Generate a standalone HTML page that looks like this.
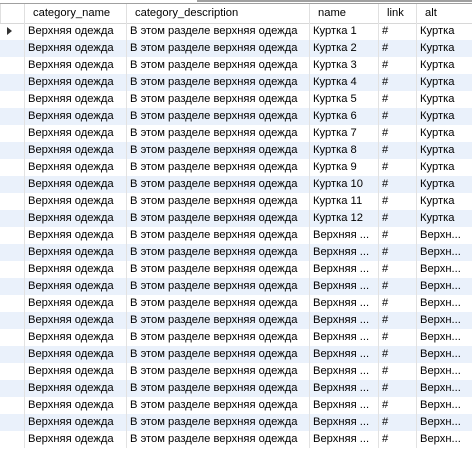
<!DOCTYPE html>
<html><head><meta charset="utf-8"><style>
body{margin:0;width:472px;height:451px;background:#fff;overflow:hidden;font-family:"Liberation Sans","DejaVu Sans",sans-serif;font-size:11.2px;color:#000;position:relative}
.top{position:absolute;left:197px;top:0;width:275px;height:2px;background:#a0a0a0}
.hdr{position:absolute;top:3px;left:0;width:472px;height:19px;border-top:1px solid #a0a0a0;border-bottom:1px solid #d8d8d8;background:#fff}
.row{position:absolute;left:0;width:472px;height:17px}
.alt{background:#eaf1fb}
.c{position:absolute;top:0;height:100%;line-height:17px;white-space:nowrap;overflow:hidden;border-left:1px solid #e2e2e2;padding-left:3px;box-sizing:border-box}
.hdr .c{line-height:19px;padding-left:8px;border-left:1px solid #e0e0e0}
.c0{left:0;width:24px;border-left:none}
.c1{left:24px;width:102px}
.c2{left:126px;width:183px}
.c3{left:309px;width:69px}
.c4{left:378px;width:38px}
.c5{left:416px;width:56px}
.arr{position:absolute;left:7px;top:4px;width:0;height:0;border-top:4px solid transparent;border-bottom:4px solid transparent;border-left:5px solid #333}
</style></head><body>
<div class="top"></div>
<div class="hdr"><div class="c c0"></div><div class="c c1">category_name</div><div class="c c2">category_description</div><div class="c c3">name</div><div class="c c4">link</div><div class="c c5">alt</div></div>
<div id="rows"></div>
<script>
var h='';
for(var i=0;i<25;i++){
var n=i<12?'Куртка '+(i+1):'Верхняя ...';
var a=i<12?'Куртка':'Верхн...';
h+='<div class="row'+(i%2?' alt':'')+'" style="top:'+(23+i*17)+'px"><div class="c c0">'+(i==0?'<div class="arr"></div>':'')+'</div><div class="c c1">Верхняя одежда</div><div class="c c2">В этом разделе верхняя одежда</div><div class="c c3">'+n+'</div><div class="c c4">#</div><div class="c c5">'+a+'</div></div>';
}
document.getElementById('rows').innerHTML=h;
</script>
</body></html>
